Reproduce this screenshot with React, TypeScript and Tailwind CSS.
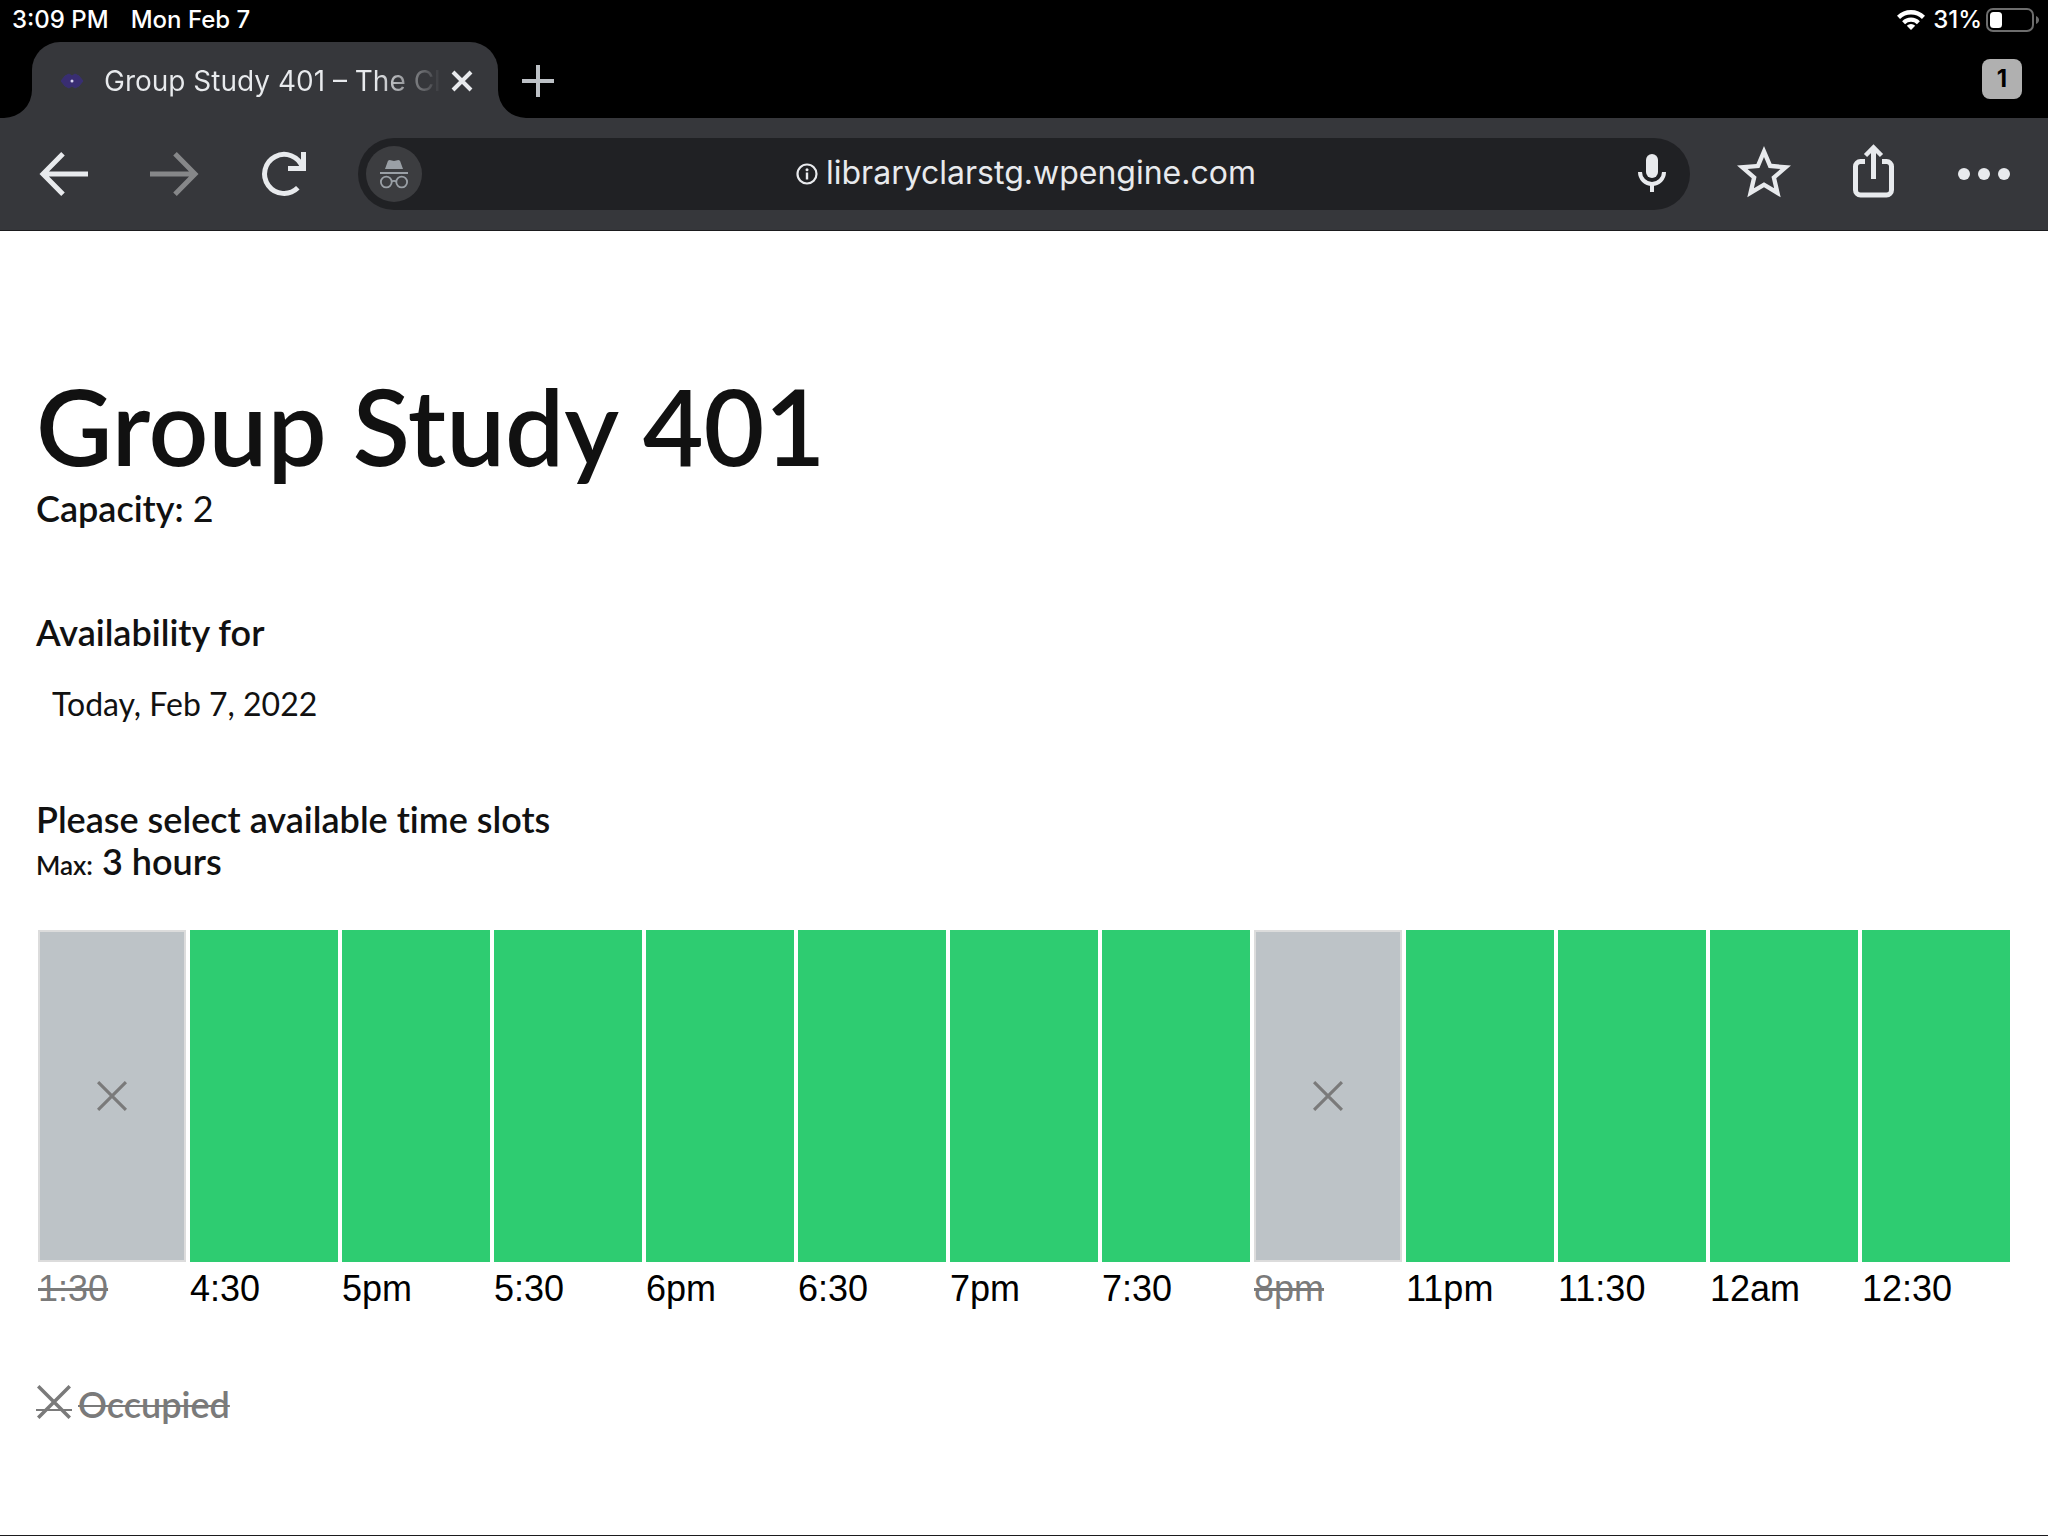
import type { ReactNode } from 'react';

type Slot = { label: string; occupied?: boolean };

const slots: Slot[] = [
  { label: '1:30', occupied: true },
  { label: '4:30' },
  { label: '5pm' },
  { label: '5:30' },
  { label: '6pm' },
  { label: '6:30' },
  { label: '7pm' },
  { label: '7:30' },
  { label: '8pm', occupied: true },
  { label: '11pm' },
  { label: '11:30' },
  { label: '12am' },
  { label: '12:30' },
];

function WifiIcon() {
  return (
    <svg className="h-5 w-7" viewBox="0 0 28 20" fill="none" stroke="#fff" strokeWidth="4" aria-hidden="true">
      <path d="M1.500 7.300a18 18 0 0 1 25 0" strokeWidth="4.400" />
      <path d="M6.600 12.700a10.600 10.600 0 0 1 14.800 0" strokeWidth="4.200" />
      <path d="M14 20l-4.200-4.200a6 6 0 0 1 8.400 0z" fill="#fff" stroke="none" />
    </svg>
  );
}

function BatteryIcon() {
  return (
    <svg className="h-6 w-[54px]" viewBox="0 0 54 24" aria-hidden="true">
      <rect x="1" y="1" width="46" height="22" rx="6" fill="none" stroke="#6d6d6d" strokeWidth="2" />
      <rect x="4" y="4" width="12" height="16" rx="3.500" fill="#fff" />
      <path d="M50 8c4 1.500 4 6.500 0 8z" fill="#6d6d6d" />
    </svg>
  );
}

function StatusBar() {
  return (
    <div className="flex h-10 items-center justify-between pl-3 pr-2 text-2xl font-medium leading-8 text-white">
      <div className="flex gap-[22px]">
        <span>3:09 PM</span>
        <span>Mon Feb 7</span>
      </div>
      <div className="flex items-center">
        <WifiIcon />
        <span className="ml-2 mr-1">31%</span>
        <BatteryIcon />
      </div>
    </div>
  );
}

function TabFlare({ side }: { side: 'left' | 'right' }) {
  return (
    <svg
      className={side === 'left' ? 'absolute right-full bottom-0 size-7' : 'absolute left-full bottom-0 size-7'}
      viewBox="0 0 28 28"
      fill="#36373b"
      aria-hidden="true"
    >
      <path d={side === 'left' ? 'M28 0v28H0A28 28 0 0 0 28 0z' : 'M0 0v28h28A28 28 0 0 1 0 0z'} />
    </svg>
  );
}

function TabStrip() {
  return (
    <div className="flex h-[78px] items-end justify-between pl-8 pr-[26px]">
      <div className="flex items-end">
        <div className="relative flex h-[76px] w-[466px] items-center rounded-t-[28px] bg-[#36373b] pt-[2px] pl-7 pr-5">
          <TabFlare side="left" />
          <svg className="h-4 w-6 shrink-0" viewBox="0 0 24 16" aria-hidden="true">
            <path
              d="M1 8l4-5 4-2 3 2 3-2 4 2 4 5-4 5-4 2-3-2-3 2-4-2z"
              fill="#3a2c7c"
              stroke="#38307a"
              strokeWidth="1"
              opacity="0.85"
            />
            <circle cx="12" cy="8" r="1.500" fill="#d8d4f0" />
          </svg>
          <span className="ml-5 flex-1 whitespace-nowrap bg-linear-to-r from-[#e8eaed] from-80% to-transparent bg-clip-text text-[28px] leading-9 text-transparent">
            Group Study 401 – The Cl
          </span>
          <button type="button" aria-label="Close tab" className="ml-1 flex size-8 items-center justify-center">
            <svg className="size-6" viewBox="0 0 24 24" stroke="#e8eaed" strokeWidth="4" aria-hidden="true">
              <path d="M3 3l18 18M21 3L3 21" />
            </svg>
          </button>
          <TabFlare side="right" />
        </div>
        <button type="button" aria-label="New tab" className="flex h-[76px] w-20 items-center justify-center pt-[2px]">
          <svg className="size-8" viewBox="0 0 32 32" stroke="#bdc1c6" strokeWidth="4" aria-hidden="true">
            <path d="M16 0v32M0 16h32" />
          </svg>
        </button>
      </div>
      <div className="flex h-[78px] items-center">
        <button
          type="button"
          aria-label="1 open tab"
          className="flex size-10 items-center justify-center rounded-lg bg-[#b0b0b0] text-2xl font-bold leading-8 text-black"
        >
          1
        </button>
      </div>
    </div>
  );
}

function ToolButton({ label, children }: { label: string; children: ReactNode }) {
  return (
    <button type="button" aria-label={label} className="flex w-[110px] shrink-0 items-center justify-center">
      <svg className="size-14 overflow-visible" viewBox="0 0 56 56" fill="none" stroke="#e8eaed" strokeWidth="5" aria-hidden="true">
        {children}
      </svg>
    </button>
  );
}

function AddressBar() {
  return (
    <div className="mx-[19px] flex h-[72px] min-w-0 flex-1 items-center justify-between rounded-full bg-[#202124] pl-2 pr-[10px]">
      <span className="flex size-14 shrink-0 rounded-full bg-[#3c3d40]">
        <svg className="size-14" viewBox="0 0 56 56" fill="none" role="img" aria-label="Incognito">
          <path d="M23.500 14l4.500 1 4.500-1 1.500.8 3 8.200H19l3-8.200z" fill="#9aa0a6" />
          <path d="M14 26h28v2H14z" fill="#9aa0a6" />
          <circle cx="20.300" cy="36" r="5.400" stroke="#9aa0a6" strokeWidth="1.800" />
          <circle cx="35.700" cy="36" r="5.400" stroke="#9aa0a6" strokeWidth="1.800" />
          <path d="M25.700 35.400q2.300-1.200 4.600 0" stroke="#9aa0a6" strokeWidth="1.800" />
        </svg>
      </span>
      <label className="flex min-w-0 items-center gap-2 pl-[6px]">
        <svg className="size-[22px] shrink-0" viewBox="0 0 22 22" fill="none" role="img" aria-label="Page address">
          <circle cx="11" cy="11" r="9.500" stroke="#e8eaed" strokeWidth="2.200" />
          <path d="M11 9.500v7" stroke="#e8eaed" strokeWidth="2.400" />
          <circle cx="11" cy="6.700" r="1.500" fill="#e8eaed" />
        </svg>
        <input
          type="text"
          defaultValue="libraryclarstg.wpengine.com"
          className="field-sizing-content min-w-0 bg-transparent pb-[2px] text-[32px] leading-10 text-[#e8eaed] outline-none"
        />
      </label>
      <button type="button" aria-label="Voice search" className="shrink-0">
        <svg className="size-14" viewBox="0 0 56 56" fill="none" aria-hidden="true">
          <rect x="22" y="8" width="12" height="24" rx="6" fill="#e8eaed" />
          <path d="M16 26a12 12 0 0 0 24 0" stroke="#e8eaed" strokeWidth="4" />
          <path d="M28 39v7" stroke="#e8eaed" strokeWidth="4" />
        </svg>
      </button>
    </div>
  );
}

function Toolbar() {
  return (
    <div className="flex h-[113px] items-center border-b border-[#1b1b1e] bg-[#36373b] px-[9px]">
      <ToolButton label="Back">
        <path d="M27 7.700L7 28l20 20.300M7 28h45" />
      </ToolButton>
      <ToolButton label="Forward">
        <path d="M29 7.700L49 28 29 48.300M49 28H4" stroke="#868789" />
      </ToolButton>
      <ToolButton label="Reload">
        <path d="M46.500 21.500A19.500 19.500 0 1 0 41.800 41.800" />
        <path d="M47.500 6v16.500H32" />
        <path d="M41.500 15l8 8.500v-6z" fill="#e8eaed" stroke="none" />
      </ToolButton>
      <AddressBar />
      <ToolButton label="Bookmark">
        <path
          transform="translate(-4.400 -5.400) scale(2.700)"
          fill="#e8eaed"
          stroke="none"
          d="M22 9.240l-7.190-.62L12 2 9.190 8.630 2 9.240l5.460 4.730L5.820 21 12 17.270 18.180 21l-1.630-7.030L22 9.240zM12 15.400l-3.760 2.270 1-4.280-3.320-2.880 4.380-.38L12 6.100l1.710 4.040 4.380.38-3.320 2.880 1 4.280L12 15.400z"
        />
      </ToolButton>
      <ToolButton label="Share">
        <path d="M19 15.500h-4.500a5 5 0 0 0-5 5V44a5 5 0 0 0 5 5h26a5 5 0 0 0 5-5V20.500a5 5 0 0 0-5-5H36" />
        <path d="M27.500 33V3" />
        <path d="M19.500 9.500l8-8 8 8" strokeWidth="4.500" />
      </ToolButton>
      <ToolButton label="Menu">
        <g fill="#e8eaed" stroke="none">
          <circle cx="8" cy="28" r="6" />
          <circle cx="28" cy="28" r="6" />
          <circle cx="48" cy="28" r="6" />
        </g>
      </ToolButton>
    </div>
  );
}

function Cross({ className }: { className: string }) {
  return (
    <svg className={className} viewBox="0 0 28 28" stroke="#7a7a7a" strokeWidth="2.900" aria-hidden="true">
      <path d="M1 1l26 26M27 1L1 27" />
    </svg>
  );
}

function SlotColumn({ label, occupied }: Slot) {
  return (
    <li className="min-w-0">
      <button type="button" disabled={occupied} className="block w-full text-left">
        <span
          className={
            occupied
              ? 'flex h-[332px] items-center justify-center border-2 border-[#dcdcdc] bg-[#bdc3c7]'
              : 'flex h-[332px] bg-[#2ecc71]'
          }
        >
          {occupied && <Cross className="size-[30px]" />}
        </span>
        <span
          className={
            occupied
              ? "block font-['Liberation_Sans',Arial,sans-serif] text-4xl leading-[54px] font-normal text-[#7a7a7a] line-through"
              : "block font-['Liberation_Sans',Arial,sans-serif] text-4xl leading-[54px] font-normal text-black"
          }
        >
          {label}
        </span>
      </button>
    </li>
  );
}

export default function App() {
  return (
    <div className="flex min-h-screen flex-col bg-white font-['Inter',sans-serif]">
      <header className="bg-black">
        <StatusBar />
        <TabStrip />
        <Toolbar />
      </header>
      <main className="flex-1 border-b border-[#1b1b1e] px-9 pt-[132px] pb-8 font-['Lato',sans-serif] text-4xl font-semibold text-[#111] [font-variant-ligatures:none]">
        <h1 className="text-[105px] leading-[124px]">Group Study 401</h1>
        <p className="mt-px leading-10">
          Capacity: <span className="font-normal">2</span>
        </p>
        <label htmlFor="day" className="mt-[84px] block leading-10">
          Availability for
        </label>
        <select
          id="day"
          className="mt-6 block h-14 appearance-none bg-transparent px-4 text-[32px] leading-10 font-normal outline-none"
        >
          <option>Today, Feb 7, 2022</option>
        </select>
        <h2 className="mt-[66px] leading-[42px]">Please select available time slots</h2>
        <p className="leading-[42px]">
          <span className="text-[26px]">Max:</span> 3 hours
        </p>
        <ul className="mx-[2px] mt-11 grid grid-cols-[repeat(13,minmax(0,1fr))] gap-x-1">
          {slots.map((slot) => (
            <SlotColumn key={slot.label} {...slot} />
          ))}
        </ul>
        <p className="mt-[68px] flex items-center gap-[6px] leading-10 text-[#7a7a7a]">
          <span className="relative flex w-9 justify-center pb-1">
            <Cross className="size-[34px]" />
            <span className="absolute inset-x-0 top-6 h-[2px] bg-[#7a7a7a]" />
          </span>
          <span className="line-through decoration-2">Occupied</span>
        </p>
      </main>
    </div>
  );
}
